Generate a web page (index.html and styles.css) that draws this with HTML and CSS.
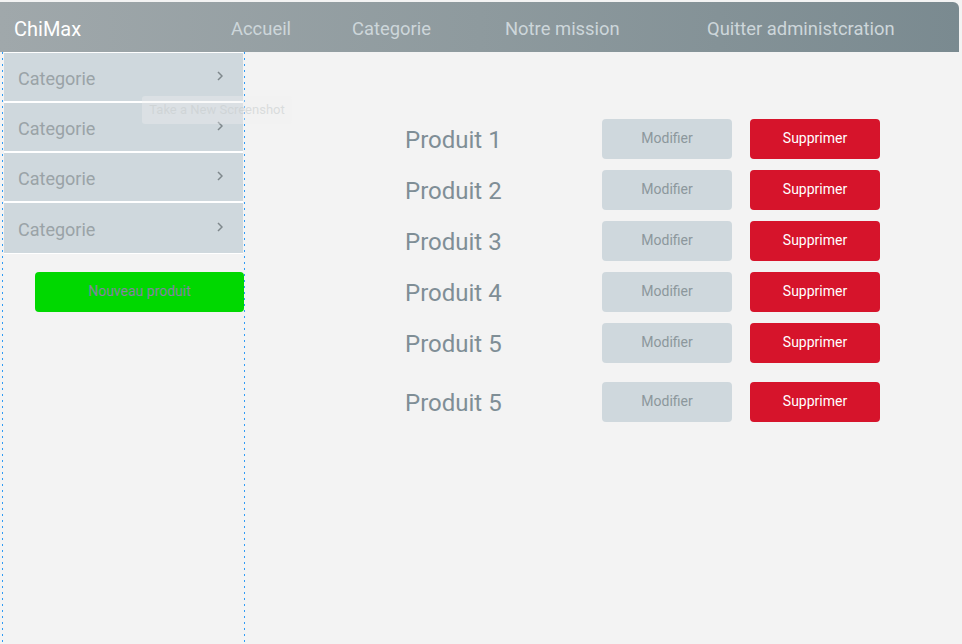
FILE: index.html
```html
<!DOCTYPE html>
<html lang="fr">
<head>
<meta charset="utf-8">
<title>ChiMax - Administration</title>
<link rel="stylesheet" href="styles.css">
</head>
<body>
<div class="page">
  <header class="topbar">
    <div class="brand">ChiMax</div>
    <nav class="nav">
      <a class="nav-item">Accueil</a>
      <a class="nav-item">Categorie</a>
      <a class="nav-item">Notre mission</a>
      <a class="nav-item">Quitter administcration</a>
    </nav>
  </header>
  <div class="body">
    <aside class="sidebar">
      <div class="cat"><span>Categorie</span><svg class="chev" viewBox="0 0 6 10" width="6" height="10"><polyline points="1,1 5,5 1,9" /></svg></div>
      <div class="cat"><span>Categorie</span><svg class="chev" viewBox="0 0 6 10" width="6" height="10"><polyline points="1,1 5,5 1,9" /></svg></div>
      <div class="cat"><span>Categorie</span><svg class="chev" viewBox="0 0 6 10" width="6" height="10"><polyline points="1,1 5,5 1,9" /></svg></div>
      <div class="cat cat-last"><span>Categorie</span><svg class="chev" viewBox="0 0 6 10" width="6" height="10"><polyline points="1,1 5,5 1,9" /></svg></div>
      <button class="btn-new">Nouveau produit</button>
    </aside>
    <main class="main">
      <div class="row"><span class="name">Produit 1</span><button class="btn btn-edit">Modifier</button><button class="btn btn-del">Supprimer</button></div>
      <div class="row"><span class="name">Produit 2</span><button class="btn btn-edit">Modifier</button><button class="btn btn-del">Supprimer</button></div>
      <div class="row"><span class="name">Produit 3</span><button class="btn btn-edit">Modifier</button><button class="btn btn-del">Supprimer</button></div>
      <div class="row"><span class="name">Produit 4</span><button class="btn btn-edit">Modifier</button><button class="btn btn-del">Supprimer</button></div>
      <div class="row"><span class="name">Produit 5</span><button class="btn btn-edit">Modifier</button><button class="btn btn-del">Supprimer</button></div>
      <div class="row row-last"><span class="name">Produit 5</span><button class="btn btn-edit">Modifier</button><button class="btn btn-del">Supprimer</button></div>
    </main>
  </div>
  <div class="ghost-tip">Take a New Screenshot</div>
</div>
</body>
</html>
```

FILE: styles.css
```css
* { box-sizing: border-box; }
html, body {
  margin: 0;
  padding: 0;
  height: 100%;
  background: #f3f3f3;
  font-family: Roboto, "Liberation Sans", Arial, sans-serif;
}
.page {
  position: relative;
  height: 100%;
  padding: 2px 3px 0 0;
  display: flex;
  flex-direction: column;
}
.topbar {
  height: 50px;
  flex: none;
  display: flex;
  align-items: center;
  background: linear-gradient(90deg, #a0a8ab 0%, #8e9a9e 50%, #7a8a90 100%);
  border-top-right-radius: 6px;
  padding: 4px 0 0 14px;
}
.brand {
  color: #ffffff;
  font-size: 20px;
  width: 217px;
  line-height: 1;
}
.nav {
  display: grid;
  grid-template-columns: 121px 153px 202px auto;
}
.nav-item {
  color: #cdd6da;
  font-size: 18.4px;
  line-height: 1;
  text-decoration: none;
}
.body {
  flex: 1;
  display: flex;
  min-height: 0;
}
.sidebar {
  margin-left: 2px;
  width: 243px;
  padding: 0 2px;
  display: flex;
  flex-direction: column;
  background-image:
    repeating-linear-gradient(180deg, #2f9bf5 0 2px, transparent 2px 6px),
    repeating-linear-gradient(180deg, #2f9bf5 0 2px, transparent 2px 6px);
  background-size: 1px 100%, 1px 100%;
  background-position: left top, right top;
  background-repeat: no-repeat;
}
.cat {
  height: 50px;
  background: #cfd8dd;
  border-top: 1px solid #ffffff;
  border-bottom: 1px solid #ffffff;
  display: flex;
  align-items: center;
  justify-content: space-between;
  padding: 0 20px 0 14px;
  color: #9aa3a7;
  font-size: 18px;
}
.cat span { margin-top: 2px; }
.cat-last { height: 52px; }
.chev {
  margin-top: -3px;
  fill: none;
  stroke: #7f888c;
  stroke-width: 1.5;
}
.btn-new {
  margin: 18px -1px 0 31px;
  height: 40px;
  border: none;
  border-radius: 4px;
  background: #00d800;
  color: #8583a2;
  font-family: inherit;
  font-size: 14px;
  padding: 0 0 2px 0;
}
.main {
  flex: 1;
  padding: 67px 0 0 160px;
  display: flex;
  flex-direction: column;
  gap: 11px;
}
.row {
  display: flex;
  align-items: center;
  height: 40px;
}
.row-last { margin-top: 8px; }
.name {
  width: 197px;
  color: #7f8e96;
  font-size: 24px;
  padding-top: 2px;
}
.btn {
  width: 130px;
  height: 40px;
  border: none;
  border-radius: 4px;
  font-family: inherit;
  font-size: 14px;
  padding: 0 0 3px 0;
}
.btn-edit {
  background: #cfd8dd;
  color: #8c979c;
}
.btn-del {
  margin-left: 18px;
  background: #d6142b;
  color: #ffffff;
}
.ghost-tip {
  position: absolute;
  left: 142px;
  top: 96px;
  width: 150px;
  height: 28px;
  border-radius: 3px;
  background: rgba(240, 242, 242, 0.35);
  color: rgba(200, 205, 206, 0.6);
  font-size: 13px;
  line-height: 28px;
  text-align: center;
}
```
